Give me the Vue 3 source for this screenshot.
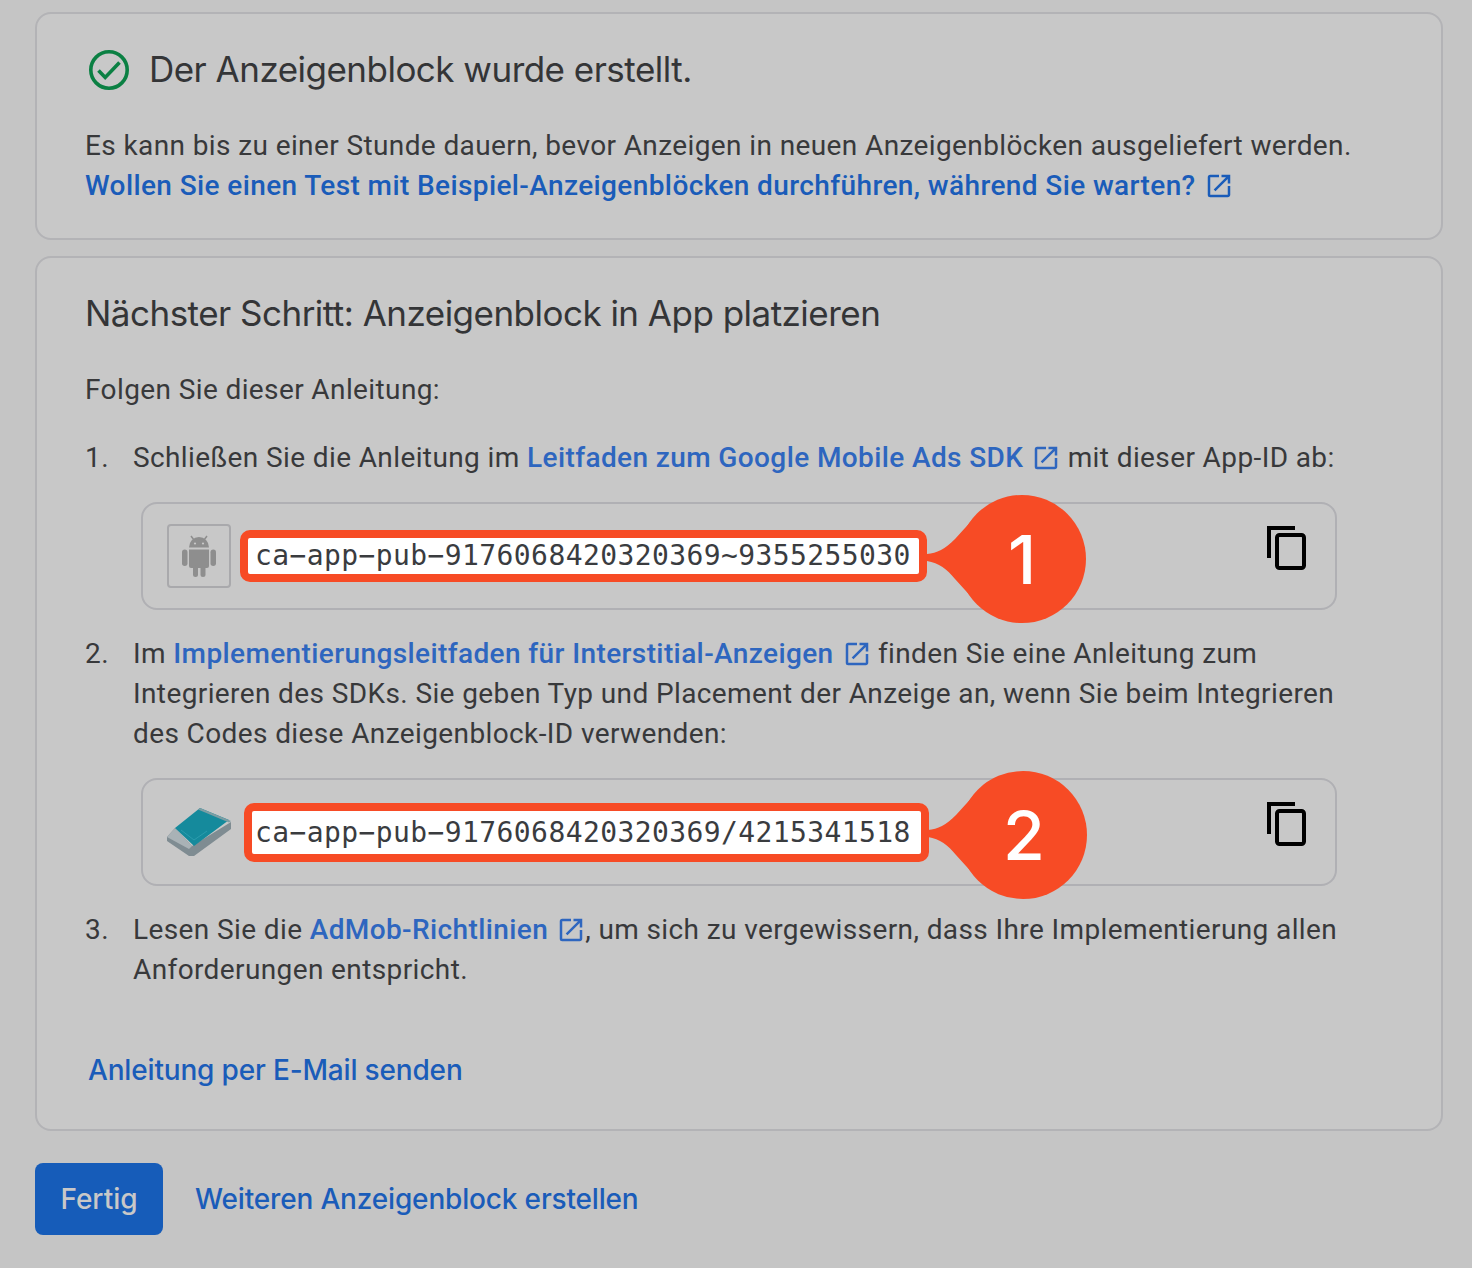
<script setup>
const exPath = 'M19 19H5V5h7V3H5a2 2 0 0 0-2 2v14a2 2 0 0 0 2 2h14c1.1 0 2-.9 2-2v-7h-2v7zM14 3v2h3.59l-9.83 9.83 1.41 1.41L19 6.41V10h2V3h-7z'
const tail = 'M2 59C12 58 20 54 30 44L50 22V106L30 84C22 74 14 68 2 66Q0 62 2 59Z'
</script>

<template>
  <main class="page">
    <section class="card first">
      <div class="head">
        <svg class="check" width="42" height="42" viewBox="0 0 42 42" aria-hidden="true">
          <circle cx="21" cy="21" r="18.2" fill="none" stroke="#0b8043" stroke-width="3.6" />
          <path d="M10.5 21.5L17.2 28.5L31.5 13.5" fill="none" stroke="#0b8043" stroke-width="3.6" />
        </svg>
        <h1 class="title">Der Anzeigenblock wurde erstellt.</h1>
      </div>
      <p class="body lead">
        Es kann bis zu einer Stunde dauern, bevor Anzeigen in neuen Anzeigenblöcken ausgeliefert werden.<br />
        <a class="link">Wollen Sie einen Test mit Beispiel-Anzeigenblöcken durchführen, während Sie warten?<svg class="ex" viewBox="0 0 24 24"><path :d="exPath" /></svg></a>
      </p>
    </section>

    <section class="card second">
      <h2 class="title">Nächster Schritt: Anzeigenblock in App platzieren</h2>
      <p class="body follow">Folgen Sie dieser Anleitung:</p>

      <div class="step s1">
        <span class="num">1.</span>
        <p class="body">Schließen Sie die Anleitung im <a class="link soft">Leitfaden zum Google Mobile Ads SDK<svg class="ex" viewBox="0 0 24 24"><path :d="exPath" /></svg></a> mit dieser App-ID ab:</p>
      </div>
      <div class="idbox">
        <span class="appicon">
          <svg width="36" height="42" viewBox="0 0 36 42" fill="#8e8e8e" aria-hidden="true">
            <path d="M8 12.500a10 10.500 0 0 1 20 0Z" />
            <path d="M10 1L13 5M26 1L23 5" stroke="#8e8e8e" stroke-width="1.500" />
            <path d="M8 14.500H28V31a2 2 0 0 1-2 2H10a2 2 0 0 1-2-2Z" />
            <rect x="1" y="14.500" width="5.500" height="16.500" rx="2.700" />
            <rect x="29.500" y="14.500" width="5.500" height="16.500" rx="2.700" />
            <rect x="12" y="30" width="5" height="12" rx="2.500" />
            <rect x="19.500" y="30" width="5" height="12" rx="2.500" />
            <circle cx="14" cy="8.500" r="1.100" fill="#c8c8c8" />
            <circle cx="22" cy="8.500" r="1.100" fill="#c8c8c8" />
          </svg>
        </span>
        <code class="code c1">ca−app−pub−9176068420320369~9355255030</code>
        <svg class="copy" width="40" height="46" viewBox="0 0 40 46" fill="none" stroke="#000" stroke-width="4" aria-hidden="true">
          <path d="M3 33V3H29" />
          <rect x="11" y="10" width="27" height="33" rx="2.500" />
        </svg>
        <div class="callout">
          <svg width="163" height="128" viewBox="0 0 163 128" fill="#f74b25" aria-hidden="true">
            <circle cx="97" cy="64" r="64" />
            <path :d="tail" />
          </svg>
          <span class="badge">1</span>
        </div>
      </div>

      <div class="step s2">
        <span class="num">2.</span>
        <p class="body">Im <a class="link soft">Implementierungsleitfaden für Interstitial-Anzeigen<svg class="ex" viewBox="0 0 24 24"><path :d="exPath" /></svg></a> finden Sie eine Anleitung zum Integrieren des SDKs. Sie geben Typ und Placement der Anzeige an, wenn Sie beim Integrieren des Codes diese Anzeigenblock-ID verwenden:</p>
      </div>
      <div class="idbox">
        <svg class="book" width="64" height="48" viewBox="0 0 64 48" aria-hidden="true">
          <path d="M0 29L8 20L25 38L64 14V21L27 48H22L0 33Z" fill="#7f8c92" />
          <path d="M0 29L22 41L25 38L8 20Z" fill="#a9b2b6" />
          <path d="M8 20L33 0L62 12L27 38Z" fill="#158a9c" />
          <path d="M33 0L64 13L62 14.500L31 1.500Z" fill="#7d9da3" />
          <path d="M14 22L27 32L40 23" fill="none" stroke="#2b9cad" stroke-width="1" />
        </svg>
        <code class="code c2">ca−app−pub−9176068420320369/4215341518</code>
        <svg class="copy" width="40" height="46" viewBox="0 0 40 46" fill="none" stroke="#000" stroke-width="4" aria-hidden="true">
          <path d="M3 33V3H29" />
          <rect x="11" y="10" width="27" height="33" rx="2.500" />
        </svg>
        <div class="callout two">
          <svg width="163" height="128" viewBox="0 0 163 128" fill="#f74b25" aria-hidden="true">
            <circle cx="97" cy="64" r="64" />
            <path :d="tail" />
          </svg>
          <span class="badge">2</span>
        </div>
      </div>

      <div class="step s2">
        <span class="num">3.</span>
        <p class="body">Lesen Sie die <a class="link soft">AdMob-Richtlinien<svg class="ex" viewBox="0 0 24 24"><path :d="exPath" /></svg></a>, um sich zu vergewissern, dass Ihre Implementierung allen Anforderungen entspricht.</p>
      </div>

      <a class="gs mail">Anleitung per E-Mail senden</a>
    </section>

    <footer class="actions">
      <button class="done" type="button">Fertig</button>
      <a class="gs another">Weiteren Anzeigenblock erstellen</a>
    </footer>
  </main>
</template>

<style scoped>
.page {
  box-sizing: border-box;
  width: 1472px;
  height: 1268px;
  padding: 12px 29px 0 35px;
  background: #c5c5c5;
  overflow: hidden;
}
.card {
  box-sizing: border-box;
  width: 1408px;
  border: 2px solid #b3b3b6;
  border-radius: 16px;
  background: #c8c8c8;
  padding: 32px 48px 0;
}
.first { height: 228px; }
.second { margin-top: 16px; height: 875px; }
.head {
  display: flex;
  align-items: center;
  height: 48px;
  margin-left: 3px;
}
.check { flex: none; margin-right: 19px; }
.title {
  margin: 0 0 2px;
  font: 400 35px/46px "Inter", sans-serif;
  letter-spacing: -0.52px;
  color: #343537;
}
.body {
  margin: 0;
  font: 400 28px/40px "Roboto", sans-serif;
  letter-spacing: 0.39px;
  color: #38393b;
}
.lead { margin-top: 32px; }
.follow { margin-top: 34px; }
.link {
  font-weight: 500;
  color: #1a5cb9;
}
.ex {
  width: 30px;
  height: 30px;
  margin: 0 -1px -6px 8px;
  fill: #1a5cb9;
}
.soft { color: #2e66bf; }
.soft .ex { fill: #2e66bf; }
.step { display: flex; }
.step .body { max-width: 1206px; }
.s1 { margin-top: 28px; }
.s2 { margin-top: 24px; }
.num {
  flex: none;
  width: 48px;
  font: 400 28px/40px "Roboto", sans-serif;
  letter-spacing: 0.39px;
  color: #38393b;
}
.idbox {
  position: relative;
  box-sizing: border-box;
  display: flex;
  align-items: center;
  width: 1196px;
  height: 108px;
  margin: 24px 0 0 56px;
  padding: 0 29px 0 24px;
  border: 2px solid #b0b0b4;
  border-radius: 16px;
}
.appicon {
  box-sizing: border-box;
  flex: none;
  display: flex;
  align-items: center;
  justify-content: center;
  width: 64px;
  height: 64px;
  border: 2px solid #a9a9ac;
  border-radius: 4px;
}
.book { flex: none; }
.code {
  box-sizing: border-box;
  display: block;
  flex: none;
  border: 8px solid #f74b25;
  border-radius: 10px;
  background: #fff;
  padding: 0 7px;
  font: 400 28px/36px "DejaVu Sans Mono", monospace;
  letter-spacing: 0.4px;
  white-space: nowrap;
  color: #3a3c3f;
}
.c1 { margin-left: 9px; height: 52px; width: 687px; }
.c2 { margin-left: 13px; height: 59px; width: 685px; line-height: 43px; padding: 0 3px; }
.copy { flex: none; margin: -16px 0 0 auto; }
.callout {
  position: absolute;
  left: 782px;
  top: -9px;
  width: 163px;
  height: 128px;
}
.two { left: 783px; }
.callout svg { display: block; }
.badge {
  position: absolute;
  left: 33px;
  top: 0;
  width: 128px;
  text-align: center;
  font: 500 68px/128px "Inter", sans-serif;
  color: #fff;
}
.two .badge { left: 34px; }
.gs {
  font: 500 28px/40px "Inter", sans-serif;
  letter-spacing: -0.17px;
  color: #1a5cb9;
}
.mail {
  display: block;
  margin: 60px 0 0 3px;
}
.actions {
  display: flex;
  align-items: center;
  margin: 32px 0 0;
}
.done {
  width: 128px;
  height: 72px;
  border: 0;
  border-radius: 8px;
  background: #165cb9;
  color: #c8c8c8;
  font: 500 28px/40px "Inter", sans-serif;
  padding: 0;
}
.another { margin-left: 32px; }
</style>

<style>
html, body { background: #c5c5c5; }
</style>
